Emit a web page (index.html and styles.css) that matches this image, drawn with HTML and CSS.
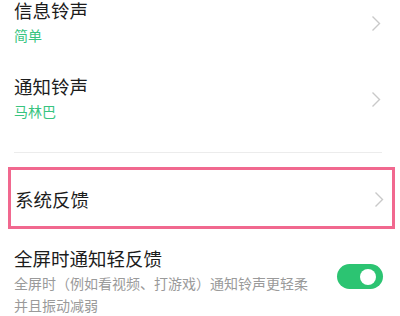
FILE: index.html
```html
<!DOCTYPE html>
<html>
	<head>
		<meta charset="utf-8">
		<title>声音与振动</title>
		<link rel="stylesheet" href="styles.css">
	</head>
	<body>
		<div class="settings">
			<!-- 铃声 -->
			<div class="row">
				<div class="row-text">
					<div class="row-title">信息铃声</div>
					<div class="row-value">简单</div>
				</div>
				<svg class="chevron" width="10" height="17" viewBox="0 0 10 17"><polyline points="1.5,1.5 8.5,8.5 1.5,15.5" fill="none" stroke="#c9c9c9" stroke-width="1.4"/></svg>
			</div>
			<div class="row">
				<div class="row-text">
					<div class="row-title">通知铃声</div>
					<div class="row-value">马林巴</div>
				</div>
				<svg class="chevron" width="10" height="17" viewBox="0 0 10 17"><polyline points="1.5,1.5 8.5,8.5 1.5,15.5" fill="none" stroke="#c9c9c9" stroke-width="1.4"/></svg>
			</div>

			<div class="divider"></div>

			<!-- 标注框 -->
			<div class="highlight">
				<div class="row single">
					<div class="row-title">系统反馈</div>
					<svg class="chevron" width="10" height="17" viewBox="0 0 10 17"><polyline points="1.5,1.5 8.5,8.5 1.5,15.5" fill="none" stroke="#c9c9c9" stroke-width="1.4"/></svg>
				</div>
			</div>

			<div class="row switch-row">
				<div class="row-text">
					<div class="row-title">全屏时通知轻反馈</div>
					<div class="row-desc">全屏时（例如看视频、打游戏）通知铃声更轻柔并且振动减弱</div>
				</div>
				<div class="switch on"><span class="knob"></span></div>
			</div>
		</div>
	</body>
</html>
```

FILE: styles.css
```css
* {
	margin: 0;
	padding: 0;
	box-sizing: border-box;
}

body {
	font-family: "Noto Sans CJK SC", "Noto Sans", sans-serif;
	background-color: #fff;
	overflow: hidden;
	height: 100vh;
}

.settings {
	margin-top: -15px;
}

/* 列表项 */
.row {
	display: flex;
	align-items: center;
	padding: 15px 19px 15px 14px;
}

.row-text {
	flex: 1;
}

.row-title {
	font-size: 18.5px;
	line-height: 20px;
	color: #1c1c1c;
}

.row-value {
	margin-top: 4px;
	font-size: 14px;
	line-height: 22px;
	color: #38c47f;
}

.chevron {
	display: block;
	flex: none;
}

.divider {
	height: 1px;
	margin: 15px 18px 0 14px;
	background-color: #ececec;
}

/* 粉色标注框 */
.highlight {
	margin: 14px 5px 0 8px;
	border: 3px solid #f1688f;
}

.row.single {
	height: 56px;
	padding: 2px 8px 0 4px;
	justify-content: space-between;
}

/* 开关 */
.switch-row {
	align-items: flex-start;
	padding-top: 19px;
	padding-right: 17px;
}

.switch-row .row-text {
	flex: none;
	width: 302px;
}

.row-desc {
	margin-top: 4px;
	font-size: 14px;
	line-height: 22px;
	color: #9a9a9a;
}

.switch {
	margin-left: auto;
	margin-top: 16px;
	width: 46px;
	height: 25px;
	border-radius: 13px;
	background-color: #e0e0e0;
	display: flex;
	align-items: center;
	padding: 0 7px;
}

.switch.on {
	background-color: #2cc472;
	justify-content: flex-end;
}

.knob {
	width: 16px;
	height: 16px;
	border-radius: 50%;
	background-color: #fff;
}
```
